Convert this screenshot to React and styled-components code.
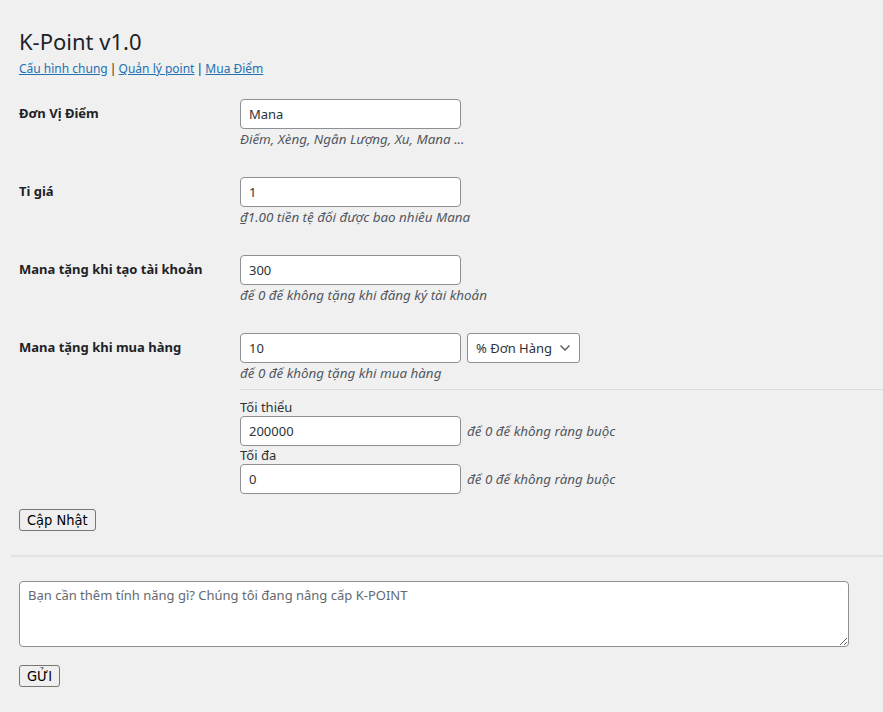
import React from "react";
import styled, { createGlobalStyle } from "styled-components";

const GlobalStyle = createGlobalStyle`
  html, body {
    margin: 0;
    padding: 0;
    background: #f0f0f1;
  }
  body {
    font-family: "Noto Sans", "Open Sans", sans-serif;
    font-size: 13px;
    color: #1d2327;
    overflow: hidden;
  }
`;

const App = () => {
  return (
    <Wrap>
      <GlobalStyle />
      <Title>K-Point v1.0</Title>
      <Nav>
        <NavLink href="#">Cấu hình chung</NavLink> | <NavLink href="#">Quản lý point</NavLink> |{" "}
        <NavLink href="#">Mua Điểm</NavLink>
      </Nav>

      <Form>
        <Row>
          <Label>Đơn Vị Điểm</Label>
          <Field>
            <Input defaultValue="Mana" />
            <Hint>Điểm, Xèng, Ngân Lượng, Xu, Mana ...</Hint>
          </Field>
        </Row>
        <Row>
          <Label>Ti giá</Label>
          <Field>
            <Input defaultValue="1" />
            <Hint>₫1.00 tiền tệ đổi được bao nhiêu Mana</Hint>
          </Field>
        </Row>
        <Row>
          <Label>Mana tặng khi tạo tài khoản</Label>
          <Field>
            <Input defaultValue="300" />
            <Hint>để 0 để không tặng khi đăng ký tài khoản</Hint>
          </Field>
        </Row>
        <Row $last>
          <Label>Mana tặng khi mua hàng</Label>
          <Field>
            <Inline>
              <Input defaultValue="10" />
              <Select>
                <span>% Đơn Hàng</span>
                <svg width="12" height="8" viewBox="0 0 12 8">
                  <path d="M1.5 1.5 L6 6 L10.5 1.5" fill="none" stroke="#50575e" strokeWidth="1.4" />
                </svg>
              </Select>
            </Inline>
            <Hint>để 0 để không tặng khi mua hàng</Hint>
            <Rule />
            <SubLabel>Tối thiểu</SubLabel>
            <Inline>
              <Input defaultValue="200000" />
              <SideHint>để 0 để không ràng buộc</SideHint>
            </Inline>
            <SubLabel>Tối đa</SubLabel>
            <Inline>
              <Input defaultValue="0" />
              <SideHint>để 0 để không ràng buộc</SideHint>
            </Inline>
          </Field>
        </Row>
      </Form>

      <Button $top="15px">Cập Nhật</Button>
      <Divider />
      <Feedback placeholder="Bạn cần thêm tính năng gì? Chúng tôi đang nâng cấp K-POINT" />
      <Button $top="18px">GỬI</Button>
    </Wrap>
  );
};

const Wrap = styled.div`
  padding: 26px 0 40px 19px;
`;
const Title = styled.h1`
  margin: 0;
  font-size: 22px;
  line-height: 30px;
  font-weight: 400;
  color: #1d2327;
`;
const Nav = styled.div`
  margin: 4px 0 6px;
  line-height: 18px;
  font-size: 12px;
  word-spacing: -1px;
`;
const NavLink = styled.a`
  color: #2271b1;
  text-decoration: underline;
  word-spacing: 0;
`;
const Form = styled.div`
  display: flex;
  flex-direction: column;
`;
const Row = styled.div`
  display: flex;
  padding: 15px 0 ${(p) => (p.$last ? "0" : "14px")};
`;
const Label = styled.div`
  width: 221px;
  flex: none;
  padding-top: 5px;
  font-weight: 700;
  font-size: 13px;
  line-height: 18px;
`;
const Field = styled.div`
  flex: 1;
  display: flex;
  flex-direction: column;
`;
const Inline = styled.div`
  display: flex;
  align-items: center;
  gap: 6px;
`;
const Input = styled.input`
  box-sizing: border-box;
  width: 221px;
  height: 30px;
  padding: 0 8px;
  border: 1px solid #8c8f94;
  border-radius: 4px;
  background: #fff;
  font-family: inherit;
  font-size: 13px;
  color: #2c3338;
  outline: none;
`;
const Select = styled.div`
  box-sizing: border-box;
  height: 30px;
  width: 113px;
  padding: 0 8px;
  display: flex;
  align-items: center;
  justify-content: space-between;
  border: 1px solid #8c8f94;
  border-radius: 3px;
  background: #fff;
  font-size: 13px;
  color: #2c3338;
`;
const Hint = styled.p`
  margin: 1px 0 0;
  line-height: 18px;
  font-size: 13.4px;
  font-style: italic;
  color: #50575e;
`;
const SideHint = styled.span`
  font-size: 13.4px;
  font-style: italic;
  color: #50575e;
`;
const Rule = styled.div`
  height: 1px;
  background: #dcdcde;
  margin: 7px 0 8px;
`;
const SubLabel = styled.div`
  line-height: 18px;
  color: #2c3338;
`;
const Button = styled.button`
  display: block;
  margin-top: ${(p) => p.$top};
  height: 22px;
  padding: 0 7px;
  border: 1px solid #767676;
  border-radius: 3px;
  background: #efefef;
  color: #000;
  font-family: "DejaVu Sans Condensed", "Liberation Sans Narrow", sans-serif;
  font-size: 14.5px;
`;
const Divider = styled.div`
  height: 2px;
  background: #e2e2e4;
  margin: 24px 0 24px -8px;
`;
const Feedback = styled.textarea`
  display: block;
  box-sizing: border-box;
  width: 830px;
  height: 66px;
  padding: 4px 8px;
  border: 1px solid #8c8f94;
  border-radius: 4px;
  background: #fff;
  font-family: inherit;
  font-size: 13px;
  line-height: 18px;
  &::placeholder {
    color: #646970;
  }
`;

export default App;
